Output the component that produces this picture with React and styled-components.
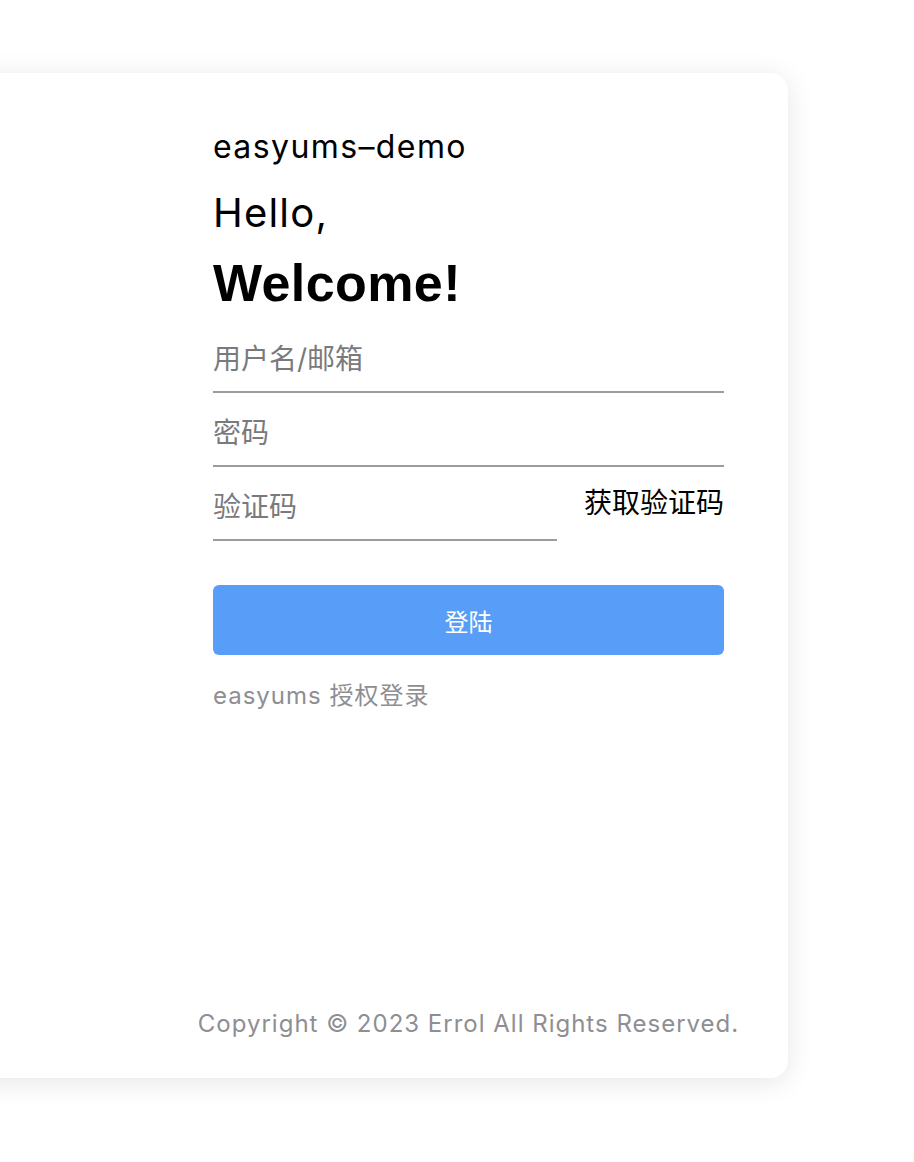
import React from "react";
import styled, { createGlobalStyle } from "styled-components";

const Global = createGlobalStyle`
  html, body { margin: 0; padding: 0; background: #ffffff; }
  body { font-family: Inter, "Noto Sans CJK SC", sans-serif; overflow: hidden; }
  * { box-sizing: border-box; }
`;

const Page = styled.div`
  width: 914px;
  height: 1162px;
  padding-top: 73px;
  overflow: hidden;
`;

const Card = styled.div`
  display: flex;
  width: 888px;
  height: 1005px;
  margin-left: -100px;
  background: #ffffff;
  border-radius: 18px;
  box-shadow: 0 4px 28px rgba(0, 0, 0, 0.1);
`;

const Aside = styled.div`
  width: 248px;
  flex: none;
`;

const Panel = styled.div`
  width: 640px;
  display: flex;
  flex-direction: column;
  padding: 50px 64px 36px 65px;
`;

const Brand = styled.div`
  font-size: 32px;
  line-height: 48px;
  letter-spacing: 1.4px;
  color: #000;
`;

const Hello = styled.div`
  margin-top: 14px;
  font-size: 40px;
  line-height: 56px;
  letter-spacing: 1.2px;
  color: #000;
`;

const Welcome = styled.div`
  margin-top: 10px;
  margin-bottom: 4px;
  font-family: "Liberation Sans", "Noto Sans CJK SC", sans-serif;
  font-size: 52px;
  line-height: 64px;
  font-weight: 700;
  letter-spacing: 0.4px;
  color: #000;
`;

const Field = styled.div`
  display: flex;
  align-items: center;
  gap: 24px;
`;

const Input = styled.input`
  display: block;
  width: ${(p) => p.$w || "100%"};
  flex: none;
  height: 74px;
  padding: 8px 0 0;
  border: none;
  border-bottom: 2px solid #9c9c9f;
  outline: none;
  background: transparent;
  font-family: inherit;
  font-size: 28px;
  line-height: 64px;
  color: #000;
  &::placeholder { color: #7a7a7c; }
`;

const CodeLink = styled.span`
  margin-left: auto;
  margin-top: -6px;
  font-size: 28px;
  color: #000;
  white-space: nowrap;
`;

const Button = styled.button`
  margin-top: 44px;
  height: 70px;
  border: none;
  border-radius: 6px;
  background: #589ef8;
  color: #fff;
  font-family: inherit;
  font-size: 24px;
`;

const AuthLink = styled.div`
  margin-top: 23px;
  font-size: 24px;
  line-height: 36px;
  letter-spacing: 1px;
  color: #8e8e93;
`;

const Copyright = styled.div`
  margin-top: auto;
  margin-left: -30px;
  margin-right: -30px;
  text-align: center;
  font-size: 24px;
  line-height: 36px;
  letter-spacing: 1px;
  color: #8e8e93;
  white-space: nowrap;
`;

export default function App() {
  return (
    <>
      <Global />
      <Page>
        <Card>
          <Aside />
          <Panel>
            <Brand>easyums–demo</Brand>
            <Hello>Hello,</Hello>
            <Welcome>Welcome!</Welcome>
            <Input placeholder="用户名/邮箱" />
            <Input type="password" placeholder="密码" />
            <Field>
              <Input $w="344px" placeholder="验证码" />
              <CodeLink>获取验证码</CodeLink>
            </Field>
            <Button>登陆</Button>
            <AuthLink>easyums 授权登录</AuthLink>
            <Copyright>Copyright © 2023 Errol All Rights Reserved.</Copyright>
          </Panel>
        </Card>
      </Page>
    </>
  );
}
